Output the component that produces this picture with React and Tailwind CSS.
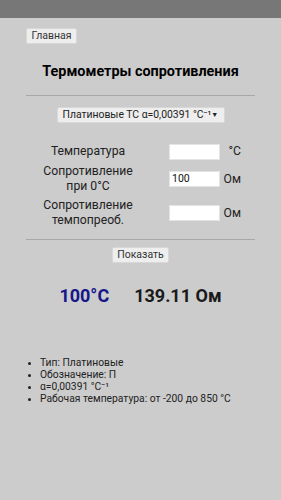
import React from "react";

const rows = [
  { label: ["Температура"], value: "", unit: "°C" },
  { label: ["Сопротивление", "при 0°C"], value: "100", unit: "Ом" },
  { label: ["Сопротивление", "темпопреоб."], value: "", unit: "Ом" },
];

const info = [
  "Тип: Платиновые",
  "Обозначение: П",
  "α=0,00391 °C⁻¹",
  "Рабочая температура: от -200 до 850 °C",
];

export default function App() {
  return (
    <div className="min-h-[500px] bg-[#cccccc] font-['Roboto',sans-serif] text-[#1e1e1e]">
      {/* top bar */}
      <div className="h-[18px] bg-[#777777]" />

      <div className="px-[26px]">
        <div className="flex pt-[10px]">
          <button className="h-4 w-[51px] rounded-[2px] border border-[#d8d8d8] bg-[#eeeeee] text-[10.5px] leading-[14px] text-[#333]">
            Главная
          </button>
        </div>

        <h1 className="mt-[19px] whitespace-nowrap text-center text-[14.4px] font-bold leading-[18px] text-black">
          Термометры сопротивления
        </h1>

        <div className="mt-[14px] h-px bg-[#a8a8a8]" />

        <div className="mt-[11px] flex justify-center">
          <div className="flex h-4 w-[168px] items-center justify-between whitespace-nowrap rounded-[2px] border border-[#d8d8d8] bg-[#eeeeee] pl-[5px] pr-[6px] text-[10.4px] leading-[14px] text-[#222]">
            <span>Платиновые ТС α=0,00391 °C⁻¹</span>
            <span className="text-[7px]">▼</span>
          </div>
        </div>

        {/* form table */}
        <div className="mt-[19px] flex flex-col gap-[2px]">
          {rows.map((r, i) => (
            <div key={i} className={`flex items-center ${r.label.length > 1 ? "h-[32px]" : "h-[19px]"}`}>
              <div className="ml-[7px] w-[110px] whitespace-nowrap text-center text-[12.2px] leading-[15px] text-[#222]">
                {r.label.map((l, j) => (
                  <div key={j}>{l}</div>
                ))}
              </div>
              <div className="ml-[26px] flex h-[16px] w-[51px] items-center border border-[#e4e4e4] bg-white pl-[2px] text-[10.5px] text-[#111]">
                {r.value}
              </div>
              <div className="w-[21px] text-right text-[12.2px] leading-[15px] text-[#222]">{r.unit}</div>
            </div>
          ))}
        </div>

        <div className="mt-[10px] h-px bg-[#a8a8a8]" />

        <div className="mt-[7px] flex justify-center">
          <button className="h-4 w-[57px] rounded-[2px] border border-[#d8d8d8] bg-[#eeeeee] text-[10.5px] leading-[14px] text-[#333]">
            Показать
          </button>
        </div>

        <div className="mt-[22px] flex justify-center gap-[25px] text-[18px] font-bold leading-[22px]">
          <span className="text-[#16168a]">100°C</span>
          <span className="text-[#1a1a1a]">139.11 Ом</span>
        </div>

        <ul className="mt-[50px] pl-[2px] text-[10.3px] leading-[12px] text-[#222]">
          {info.map((t, i) => (
            <li key={i} className="flex items-center whitespace-nowrap">
              <span className="mr-[9px] inline-block h-[3px] w-[3px] rounded-full bg-[#222]" />
              <span>{t}</span>
            </li>
          ))}
        </ul>
      </div>
    </div>
  );
}
